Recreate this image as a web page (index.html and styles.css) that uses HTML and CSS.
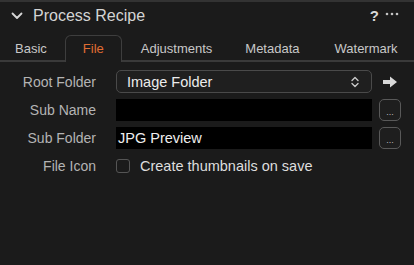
FILE: index.html
```html
<!DOCTYPE html>
<html lang="en">
<head>
    <meta charset="UTF-8">
    <meta name="viewport" content="width=device-width, initial-scale=1.0">
    <title>Process Recipe</title>
    <link rel="stylesheet" href="styles.css">
</head>
<body>
    <div class="panel">
        <header class="title-bar">
            <svg class="chevron" width="12" height="8" viewBox="0 0 12 8">
                <path d="M1.5 1.5 L6 6 L10.5 1.5" fill="none" stroke="#d6d6d6" stroke-width="1.8" stroke-linecap="round" stroke-linejoin="round"/>
            </svg>
            <h1>Process Recipe</h1>
            <span class="help">?</span>
            <svg class="more" width="14" height="4" viewBox="0 0 14 4">
                <circle cx="2" cy="2" r="1.3" fill="#c4c4c4"/>
                <circle cx="7" cy="2" r="1.3" fill="#c4c4c4"/>
                <circle cx="12" cy="2" r="1.3" fill="#c4c4c4"/>
            </svg>
        </header>

        <nav class="tabs">
            <span class="tab">Basic</span>
            <span class="tab active">File</span>
            <span class="tab">Adjustments</span>
            <span class="tab">Metadata</span>
            <span class="tab">Watermark</span>
        </nav>

        <div class="form">
            <label class="label">Root Folder</label>
            <div class="select">
                <span>Image Folder</span>
                <svg width="12" height="14" viewBox="0 0 12 14">
                    <path d="M3 5.5 L6 2.5 L9 5.5 M3 8.5 L6 11.5 L9 8.5" fill="none" stroke="#c8c8c8" stroke-width="1.4" stroke-linecap="round" stroke-linejoin="round"/>
                </svg>
            </div>
            <div class="side">
                <svg width="16" height="12" viewBox="0 0 16 12">
                    <path d="M1 4 H8 V0.5 L15 6 L8 11.5 V8 H1 Z" fill="#d8d8d8"/>
                </svg>
            </div>

            <label class="label">Sub Name</label>
            <div class="field"></div>
            <div class="side"><button class="dots">...</button></div>

            <label class="label">Sub Folder</label>
            <div class="field">JPG Preview</div>
            <div class="side"><button class="dots">...</button></div>

            <label class="label">File Icon</label>
            <div class="check-row">
                <span class="checkbox"></span>
                <span>Create thumbnails on save</span>
            </div>
            <div></div>
        </div>
    </div>
</body>
</html>
```

FILE: styles.css
```css
body {
    margin: 0;
    padding: 0;
    background-color: #1b1b1b;
    font-family: "Liberation Sans", Arial, sans-serif;
    color: #d0d0d0;
}

.panel {
    width: 414px;
    height: 265px;
    border-top: 2px solid #333;
    box-sizing: border-box;
}

.title-bar {
    display: flex;
    align-items: center;
    height: 27px;
    padding: 0 15px 0 11px;
}

.chevron {
    margin-right: 10px;
}

.title-bar h1 {
    flex: 1;
    margin: 0;
    font-size: 16px;
    font-weight: normal;
    color: #d4d4d4;
}

.help {
    font-size: 15px;
    font-weight: bold;
    color: #d8d8d8;
    margin-right: 6px;
}

.more {
    margin-top: -4px;
}

.tabs {
    display: flex;
    align-items: flex-end;
    height: 33px;
    padding-left: 3px;
    border-bottom: 2px solid #3a3a3a;
    box-sizing: border-box;
}

.tab {
    font-size: 13px;
    color: #c8c8c8;
    padding: 0 12px 4px;
}

.tab:nth-child(3) { margin-left: 7px; }
.tab:nth-child(4) { margin-left: 9px; }
.tab:nth-child(5) { margin-left: 11px; }

.tab.active {
    color: #e06d33;
    border: 1px solid #3e3e3e;
    border-bottom: none;
    border-radius: 6px 6px 0 0;
    padding: 5px 17px 6px;
    margin-left: 6px;
    margin-bottom: -2px;
    background-color: #1b1b1b;
}

.form {
    display: grid;
    grid-template-columns: 109px 256px 22px;
    column-gap: 7px;
    row-gap: 6px;
    padding: 8px 0 0 0;
    align-items: center;
}

.form .side {
    display: flex;
    justify-content: center;
}

.label {
    text-align: right;
    padding-right: 13px;
    font-size: 14px;
    color: #b4b4b4;
}

.select {
    display: flex;
    align-items: center;
    justify-content: space-between;
    height: 21px;
    border: 1px solid #4a4a4a;
    border-radius: 5px;
    padding: 0 10px;
    font-size: 14.5px;
    color: #ececec;
    background-color: #1f1f1f;
}

.field {
    height: 22px;
    line-height: 22px;
    background-color: #000;
    padding: 0 2px;
    font-size: 14.5px;
    color: #eee;
}

.dots {
    width: 22px;
    height: 22px;
    padding: 5px 0 0;
    border: 1.5px solid #595959;
    border-radius: 5px;
    background-color: #1e1e1e;
    color: #bbb;
    font-family: "Liberation Sans", Arial, sans-serif;
    font-size: 9px;
    line-height: 9px;
}

.check-row {
    display: flex;
    align-items: center;
    height: 22px;
    font-size: 14.5px;
    color: #dedede;
}

.checkbox {
    width: 12px;
    height: 12px;
    border: 1px solid #555;
    border-radius: 3px;
    margin-right: 10px;
}
```
